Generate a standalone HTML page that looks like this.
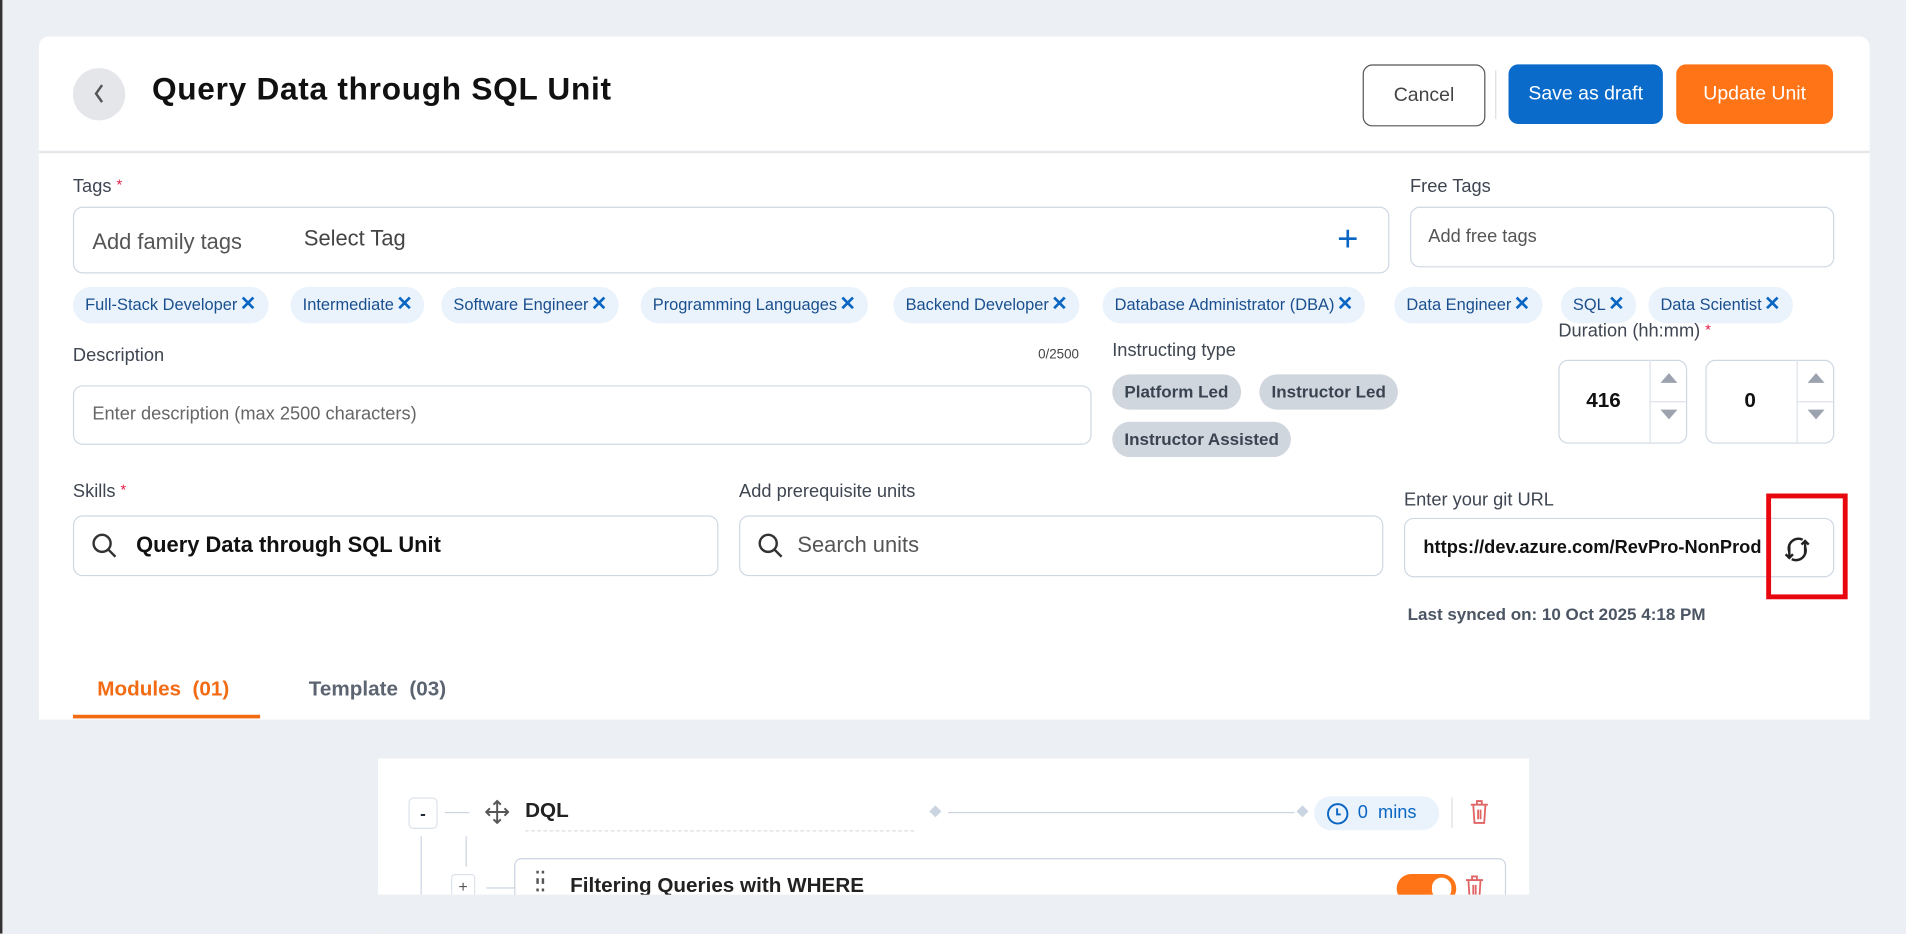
<!DOCTYPE html>
<html><head><meta charset="utf-8"><style>
html,body{margin:0;padding:0;width:1906px;height:934px;overflow:hidden;background:#eceff3;}
#w{position:absolute;left:0;top:0;width:1568px;height:768px;transform:scale(1.21556);transform-origin:0 0;font-family:"Liberation Sans",sans-serif;color:#1f2937;}
.a{position:absolute;box-sizing:border-box;}
.lbl{font-size:15px;color:#3f4651;}
.inp{border:1px solid #cfd8e3;border-radius:8px;background:#fff;}
.chip{position:absolute;top:236px;height:30px;background:#eaf3fc;border-radius:15px;font-size:13.5px;color:#1a4f8e;line-height:30px;padding:0 10px;white-space:nowrap;}
.chip b{font-weight:bold;color:#0a66c2;font-size:16px;margin-left:2px;}
.ic{position:absolute;height:29px;background:#cfd6de;border-radius:15px;font-size:14px;font-weight:bold;color:#3a4350;line-height:29px;padding:0 10px;}
.btn{position:absolute;top:53px;height:49px;border-radius:8px;font-size:16px;line-height:49px;text-align:center;}
</style></head><body><div id="w">
<div class="a" style="left:0;top:0;width:2px;height:768px;background:#333"></div>
<div class="a" style="left:32px;top:30px;width:1506px;height:562px;background:#fff;border-radius:8px 8px 0 0"></div>
<div class="a" style="left:32px;top:124px;width:1506px;height:2px;background:#e5e7eb"></div>
<div class="a" style="left:60px;top:56px;width:43px;height:43px;border-radius:50%;background:#e4e6ea"></div>
<svg class="a" style="left:72px;top:66px" width="20" height="22"><path d="M12 4 L7 11 L12 18" stroke="#555" stroke-width="2" fill="none"/></svg>
<div class="a" style="left:125px;top:58px;font-size:26px;font-weight:bold;color:#111;letter-spacing:0.6px">Query Data through SQL Unit</div>
<div class="btn" style="left:1121px;width:99px;border:1px solid #555;color:#444">Cancel</div>
<div class="a" style="left:1230px;top:58px;width:1px;height:40px;background:#ddd"></div>
<div class="btn" style="left:1241px;width:127px;background:#0a6bcb;color:#fff">Save as draft</div>
<div class="btn" style="left:1379px;width:129px;background:#ff7417;color:#fff">Update Unit</div>

<div class="a lbl" style="left:60px;top:145px">Tags <span style="color:#e11d48;font-size:12px;vertical-align:top">*</span></div>
<div class="a inp" style="left:60px;top:170px;width:1083px;height:55px"></div>
<div class="a" style="left:76px;top:189px;font-size:18px;color:#555">Add family tags</div>
<div class="a" style="left:250px;top:186px;font-size:18px;color:#444">Select Tag</div>
<div class="a" style="left:1100px;top:180px;font-size:30px;color:#0a66c2;line-height:34px">+</div>
<div class="a lbl" style="left:1160px;top:145px">Free Tags</div>
<div class="a inp" style="left:1160px;top:170px;width:349px;height:50px"></div>
<div class="a" style="left:1175px;top:186px;font-size:15px;color:#555">Add free tags</div>

<div class="chip" style="left:60px">Full-Stack Developer<b>✕</b></div>
<div class="chip" style="left:239px">Intermediate<b>✕</b></div>
<div class="chip" style="left:363px">Software Engineer<b>✕</b></div>
<div class="chip" style="left:527px">Programming Languages<b>✕</b></div>
<div class="chip" style="left:735px">Backend Developer<b>✕</b></div>
<div class="chip" style="left:907px">Database Administrator (DBA)<b>✕</b></div>
<div class="chip" style="left:1147px">Data Engineer<b>✕</b></div>
<div class="chip" style="left:1284px">SQL<b>✕</b></div>
<div class="chip" style="left:1356px">Data Scientist<b>✕</b></div>

<div class="a lbl" style="left:60px;top:284px">Description</div>
<div class="a" style="left:854px;top:286px;font-size:11px;color:#444">0/2500</div>
<div class="a inp" style="left:60px;top:317px;width:838px;height:49px"></div>
<div class="a" style="left:76px;top:332px;font-size:15px;color:#666">Enter description (max 2500 characters)</div>

<div class="a lbl" style="left:915px;top:280px">Instructing type</div>
<div class="ic" style="left:915px;top:308px">Platform Led</div>
<div class="ic" style="left:1036px;top:308px">Instructor Led</div>
<div class="ic" style="left:915px;top:347px">Instructor Assisted</div>

<div class="a lbl" style="left:1282px;top:264px">Duration (hh:mm) <span style="color:#e11d48;font-size:12px;vertical-align:top">*</span></div>
<div class="a inp" style="left:1282px;top:296px;width:106px;height:69px"></div>
<div class="a" style="left:1357px;top:296px;width:1px;height:69px;background:#dde3ea"></div>
<div class="a" style="left:1357px;top:330px;width:30px;height:1px;background:#dde3ea"></div>
<div class="a" style="left:1305px;top:320px;font-size:17px;font-weight:bold;color:#111">416</div>
<div class="a" style="left:1366px;top:307px;border:7px solid transparent;border-bottom:8px solid #9ca3af;border-top:0"></div>
<div class="a" style="left:1366px;top:337px;border:7px solid transparent;border-top:8px solid #9ca3af;border-bottom:0"></div>
<div class="a inp" style="left:1403px;top:296px;width:106px;height:69px"></div>
<div class="a" style="left:1478px;top:296px;width:1px;height:69px;background:#dde3ea"></div>
<div class="a" style="left:1478px;top:330px;width:30px;height:1px;background:#dde3ea"></div>
<div class="a" style="left:1435px;top:320px;font-size:17px;font-weight:bold;color:#111">0</div>
<div class="a" style="left:1487px;top:307px;border:7px solid transparent;border-bottom:8px solid #9ca3af;border-top:0"></div>
<div class="a" style="left:1487px;top:337px;border:7px solid transparent;border-top:8px solid #9ca3af;border-bottom:0"></div>

<div class="a lbl" style="left:60px;top:396px">Skills <span style="color:#e11d48;font-size:12px;vertical-align:top">*</span></div>
<div class="a inp" style="left:60px;top:424px;width:531px;height:50px"></div>
<svg class="a" style="left:74px;top:437px" width="24" height="24"><circle cx="10" cy="10" r="7" stroke="#333" stroke-width="2" fill="none"/><path d="M15 15 L21 21" stroke="#333" stroke-width="2"/></svg>
<div class="a" style="left:112px;top:438px;font-size:18px;font-weight:bold;color:#111">Query Data through SQL Unit</div>
<div class="a lbl" style="left:608px;top:396px">Add prerequisite units</div>
<div class="a inp" style="left:608px;top:424px;width:530px;height:50px"></div>
<svg class="a" style="left:622px;top:437px" width="24" height="24"><circle cx="10" cy="10" r="7" stroke="#333" stroke-width="2" fill="none"/><path d="M15 15 L21 21" stroke="#333" stroke-width="2"/></svg>
<div class="a" style="left:656px;top:438px;font-size:18px;color:#555">Search units</div>

<div class="a lbl" style="left:1155px;top:403px">Enter your git URL</div>
<div class="a inp" style="left:1155px;top:426px;width:354px;height:49px;overflow:hidden"><div style="position:absolute;left:15px;top:15px;width:281px;overflow:hidden;white-space:nowrap;font-size:15px;font-weight:bold;color:#111">https://dev.azure.com/RevPro-NonProd</div></div>
<svg class="a" style="left:1465px;top:438px" width="28" height="28"><path d="M7 16 A8 8 0 0 1 18 6" stroke="#222" stroke-width="2" fill="none"/><path d="M7 10 L7 21 M4 18 L7 21 L10 18" stroke="#222" stroke-width="2" fill="none"/><path d="M20 12 A8 8 0 0 1 9 22" stroke="#222" stroke-width="2" fill="none"/><path d="M20 18 L20 7 M17 10 L20 7 L23 10" stroke="#222" stroke-width="2" fill="none"/></svg>
<div class="a" style="left:1453px;top:406px;width:67px;height:87px;border:4px solid #e8070e"></div>
<div class="a" style="left:1158px;top:497px;font-size:14px;font-weight:bold;color:#4b5563">Last synced on: 10 Oct 2025 4:18 PM</div>

<div class="a" style="left:80px;top:557px;font-size:17px;font-weight:bold;color:#f26b13">Modules&nbsp; (01)</div>
<div class="a" style="left:254px;top:557px;font-size:17px;font-weight:bold;color:#5b6470">Template&nbsp; (03)</div>
<div class="a" style="left:60px;top:588px;width:154px;height:3px;background:#f26b13"></div>

<div class="a" style="left:311px;top:624px;width:947px;height:112px;background:#fff"></div>
<div class="a" style="left:336px;top:656px;width:24px;height:26px;border:1px solid #dde3ea;border-radius:4px;text-align:center;font-size:14px;font-weight:bold;line-height:24px">-</div>
<div class="a" style="left:366px;top:668px;width:20px;height:1px;background:#cbd5e1"></div>
<svg class="a" style="left:398px;top:657px" width="22" height="22"><path d="M11 2V20M2 11H20M8 5L11 2L14 5M8 17L11 20L14 17M5 8L2 11L5 14M17 8L20 11L17 14" stroke="#555" stroke-width="1.6" fill="none"/></svg>
<div class="a" style="left:432px;top:657px;font-size:17px;font-weight:bold;color:#222">DQL</div>
<div class="a" style="left:432px;top:683px;width:320px;border-top:1px dashed #ddd"></div>
<div class="a" style="left:766px;top:664px;width:7px;height:7px;background:#cbd5e1;transform:rotate(45deg)"></div>
<div class="a" style="left:780px;top:668px;width:285px;height:1px;background:#cbd5e1"></div>
<div class="a" style="left:1068px;top:664px;width:7px;height:7px;background:#cbd5e1;transform:rotate(45deg)"></div>
<div class="a" style="left:1081px;top:655px;width:103px;height:28px;background:#eaf3fc;border-radius:14px;color:#0a66c2;font-size:15px;line-height:28px"><svg style="position:absolute;left:10px;top:5px" width="19" height="19"><circle cx="9.5" cy="9.5" r="8" stroke="#0a66c2" stroke-width="1.6" fill="none"/><path d="M9 5V10H12" stroke="#0a66c2" stroke-width="1.6" fill="none"/></svg><span style="position:absolute;left:36px">0 &nbsp;mins</span></div>
<div class="a" style="left:1194px;top:656px;width:1px;height:25px;background:#ddd"></div>
<svg class="a" style="left:1207px;top:657px" width="20" height="22"><path d="M3 5H17M8 5V2H12V5M5 5L6 20H14L15 5M9 9V17M11 9V17" stroke="#e06666" stroke-width="1.5" fill="none"/></svg>
<div class="a" style="left:346px;top:688px;width:1px;height:48px;background:#cbd5e1"></div>
<div class="a" style="left:383px;top:688px;width:1px;height:25px;background:#cbd5e1"></div>
<div class="a" style="left:371px;top:719px;width:20px;height:20px;border:1px solid #dde3ea;border-radius:3px;text-align:center;font-size:13px;color:#555;line-height:20px">+</div>
<div class="a" style="left:400px;top:730px;width:24px;height:1px;background:#cbd5e1"></div>
<div class="a" style="left:423px;top:706px;width:816px;height:40px;border:1px solid #cbd5e1;border-radius:6px;background:#fff;overflow:hidden"></div>
<div class="a" style="left:440px;top:719px;font-size:14px;line-height:6px;color:#555;font-weight:bold">⁚⁚<br>⁚⁚</div>
<div class="a" style="left:469px;top:719px;font-size:17px;font-weight:bold;color:#222">Filtering Queries with WHERE</div>
<div class="a" style="left:1149px;top:719px;width:49px;height:24px;background:#ff7417;border-radius:12px"><div style="position:absolute;right:4px;top:3px;width:16px;height:18px;background:#fff;border-radius:8px"></div></div>
<svg class="a" style="left:1203px;top:719px" width="20" height="22"><path d="M3 5H17M8 5V2H12V5M5 5L6 20H14L15 5M9 9V17M11 9V17" stroke="#e06666" stroke-width="1.5" fill="none"/></svg>
<div class="a" style="left:311px;top:736px;width:960px;height:32px;background:#eceff3"></div>
</div></body></html>
